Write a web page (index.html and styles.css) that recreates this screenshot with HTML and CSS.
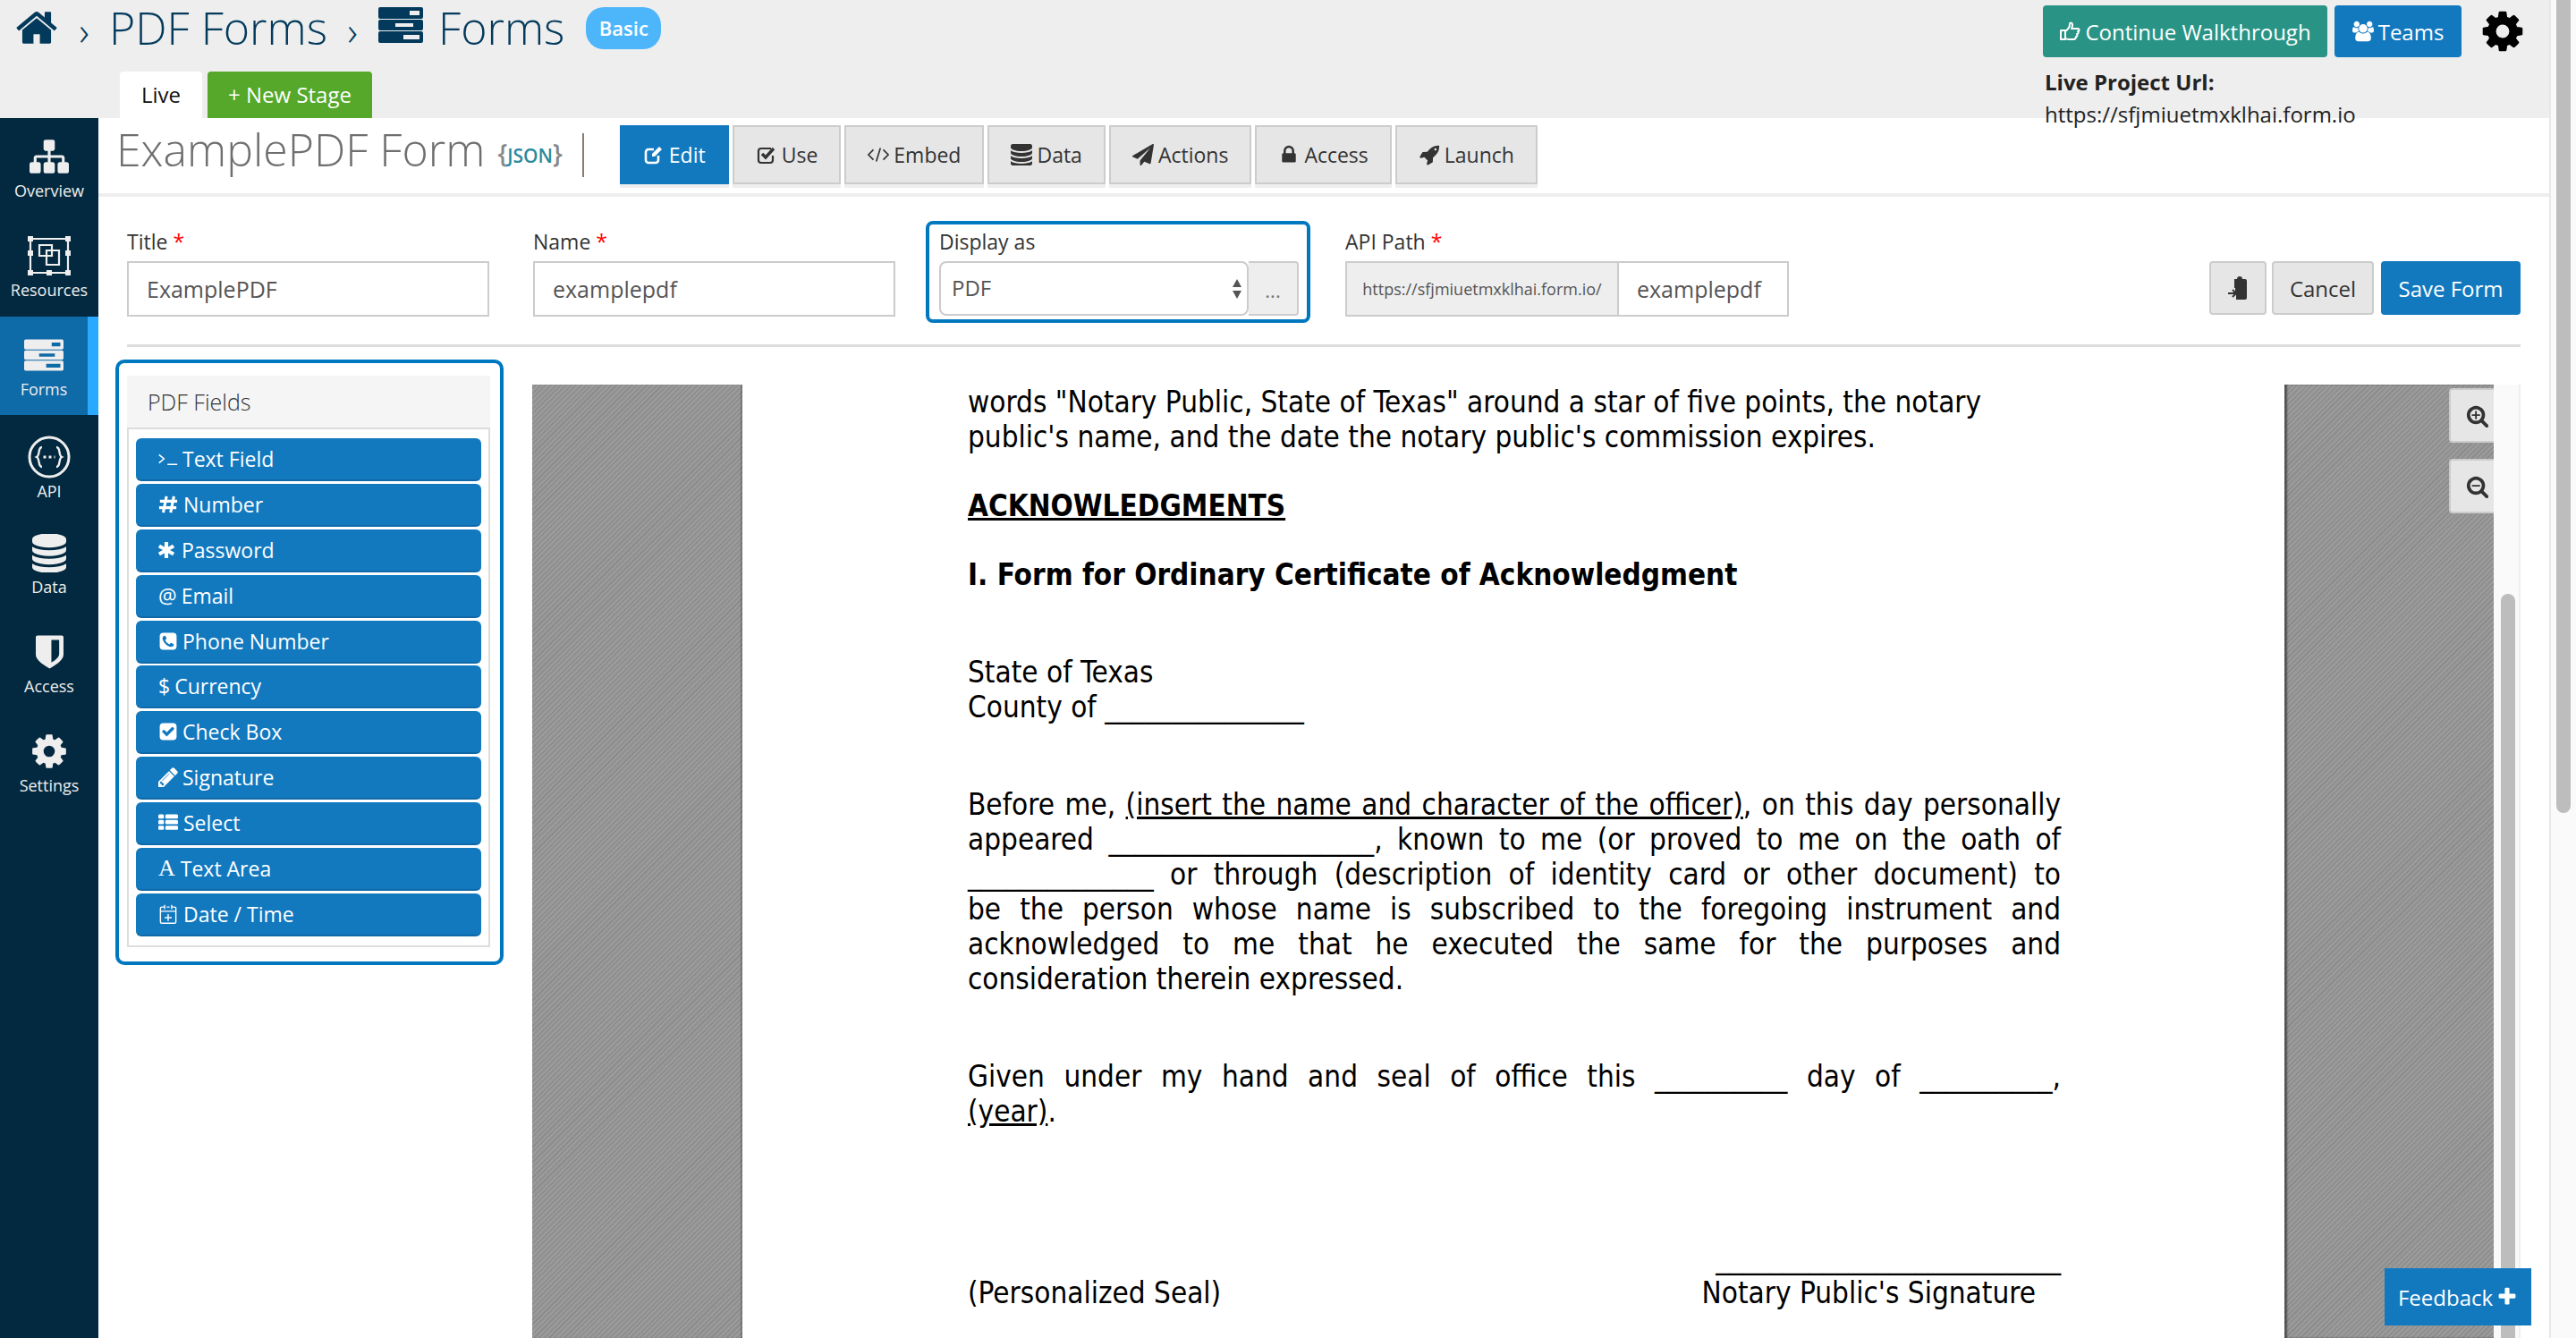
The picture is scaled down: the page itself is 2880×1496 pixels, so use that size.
FILE: index.html
```html
<!DOCTYPE html>
<html lang="en">
<head>
    <meta charset="UTF-8">
    <title>Forms</title>
    <link rel="stylesheet" href="styles.css">
</head>
<body>
    <svg class="sprite" xmlns="http://www.w3.org/2000/svg">
        <symbol id="i-home" viewBox="0 0 1792 1792"><path d="M1472 992v480q0 26-19 45t-45 19h-384v-384h-256v384h-384q-26 0-45-19t-19-45v-480q0-1 .5-3t.5-3l575-474 575 474q1 2 1 6zm223-69l-62 74q-8 9-21 11h-3q-13 0-21-7l-692-577-692 577q-12 8-24 7-13-2-21-11l-62-74q-8-10-7-23.5t11-21.5l719-599q32-26 76-26t76 26l244 204v-195q0-14 9-23t23-9h192q14 0 23 9t9 23v408l219 182q10 8 11 21.5t-7 23.5z"/></symbol>
        <symbol id="i-cog" viewBox="0 0 1792 1792"><path d="M1152 896q0-106-75-181t-181-75-181 75-75 181 75 181 181 75 181-75 75-181zm512-109v222q0 12-8 23t-20 13l-185 28q-19 54-39 91 35 50 107 138 10 12 10 25t-9 23q-27 37-99 108t-94 71q-12 0-26-9l-138-108q-44 23-91 38-16 136-29 186-7 28-36 28h-222q-14 0-24.5-8.5t-11.5-21.5l-28-184q-49-16-90-37l-141 107q-10 9-25 9-14 0-25-11-126-114-165-168-7-10-7-23 0-12 8-23 15-21 51-66.5t54-70.5q-27-50-41-99l-183-27q-13-2-21-12.5t-8-23.5v-222q0-12 8-23t19-13l186-28q14-46 39-92-40-57-107-138-10-12-10-24 0-10 9-23 26-36 98.5-107.5t94.5-71.5q13 0 26 10l138 107q44-23 91-38 16-136 29-186 7-28 36-28h222q14 0 24.5 8.5t11.5 21.5l28 184q49 16 90 37l142-107q9-9 24-9 13 0 25 10 129 119 165 170 7 8 7 22 0 12-8 23-15 21-51 66.5t-54 70.5q26 50 41 98l183 28q13 2 21 12.5t8 23.5z"/></symbol>
        <symbol id="i-database" viewBox="128 128 1536 1536"><path d="M896 768q237 0 443-43t325-127v170q0 69-103 128t-280 93.5-385 34.5-385-34.5-280-93.5-103-128v-170q119 84 325 127t443 43zm0 768q237 0 443-43t325-127v170q0 69-103 128t-280 93.5-385 34.5-385-34.5-280-93.5-103-128v-170q119 84 325 127t443 43zm0-384q237 0 443-43t325-127v170q0 69-103 128t-280 93.5-385 34.5-385-34.5-280-93.5-103-128v-170q119 84 325 127t443 43zm0-1152q208 0 385 34.5t280 93.5 103 128v128q0 69-103 128t-280 93.5-385 34.5-385-34.5-280-93.5-103-128v-128q0-69 103-128t280-93.5 385-34.5z"/></symbol>
        <symbol id="i-plus" viewBox="0 0 1792 1792"><path d="M1600 736v192q0 40-28 68t-68 28h-416v416q0 40-28 68t-68 28h-192q-40 0-68-28t-28-68v-416h-416q-40 0-68-28t-28-68v-192q0-40 28-68t68-28h416v-416q0-40 28-68t68-28h192q40 0 68 28t28 68v416h416q40 0 68 28t28 68z"/></symbol>
        <symbol id="i-lock" viewBox="0 0 1792 1792"><path d="M640 768h512v-192q0-106-75-181t-181-75-181 75-75 181v192zm832 96v576q0 40-28 68t-68 28h-960q-40 0-68-28t-28-68v-576q0-40 28-68t68-28h32v-192q0-184 132-316t316-132 316 132 132 316v192h32q40 0 68 28t28 68z"/></symbol>
        <symbol id="i-check-square" viewBox="0 0 1792 1792"><path d="M813 1299l614-614q19-19 19-45t-19-45l-102-102q-19-19-45-19t-45 19l-467 467-211-211q-19-19-45-19t-45 19l-102 102q-19 19-19 45t19 45l358 358q19 19 45 19t45-19zm851-883v960q0 119-84.5 203.5t-203.5 84.5h-960q-119 0-203.5-84.5t-84.5-203.5v-960q0-119 84.5-203.5t203.5-84.5h960q119 0 203.5 84.5t84.5 203.5z"/></symbol>
        <symbol id="i-phone-square" viewBox="0 0 1792 1792"><path d="M1408 1193q0-11-2-16t-18-16.5-40.5-25-47.5-26.5-45.5-25-28.5-15q-5-3-19-13t-25-15-21-5q-15 0-36.5 20.5t-39.5 45-38.5 45-33.5 20.5q-7 0-16.5-3.5t-15.5-6.5-17-9.5-14-8.5q-99-55-170-126.5t-127-170.5q-2-3-8.5-14t-9.5-17-6.5-15.5-3.5-16.5q0-13 20.5-33.5t45-38.5 45-39.5 20.5-36.5q0-10-5-21t-15-25-13-19q-3-6-15-28.5t-25-45.5-26.5-47.5-25-40.5-16.5-18-16-2q-48 0-101 22-46 21-80 94.5t-34 130.5q0 16 2.5 34t5 30.5 9 33 10 29.5 12.5 33 11 30q60 164 216.5 320.5t320.5 216.5q6 2 30 11t33 12.5 29.5 10 33 9 30.5 5 34 2.5q57 0 130.5-34t94.5-80q22-53 22-101zm256-777v960q0 119-84.5 203.5t-203.5 84.5h-960q-119 0-203.5-84.5t-84.5-203.5v-960q0-119 84.5-203.5t203.5-84.5h960q119 0 203.5 84.5t84.5 203.5z"/></symbol>
        <symbol id="i-pencil" viewBox="128 128 1536 1536"><path d="M491 1536l91-91-235-235-91 91v107h128v128h107zm523-928q0-22-22-22-10 0-17 7l-542 542q-7 7-7 17 0 22 22 22 10 0 17-7l542-542q7-7 7-17zm-54-192l416 416-832 832h-416v-416zm683 96q0 53-37 90l-166 166-416-416 166-165q36-38 90-38 53 0 91 38l235 234q37 39 37 91z"/></symbol>
        <symbol id="i-th-list" viewBox="0 128 1792 1536"><path d="M512 1248v192q0 40-28 68t-68 28h-320q-40 0-68-28t-28-68v-192q0-40 28-68t68-28h320q40 0 68 28t28 68zm0-512v192q0 40-28 68t-68 28h-320q-40 0-68-28t-28-68v-192q0-40 28-68t68-28h320q40 0 68 28t28 68zm1280 512v192q0 40-28 68t-68 28h-960q-40 0-68-28t-28-68v-192q0-40 28-68t68-28h960q40 0 68 28t28 68zm-1280-1024v192q0 40-28 68t-68 28h-320q-40 0-68-28t-28-68v-192q0-40 28-68t68-28h320q40 0 68 28t28 68zm1280 512v192q0 40-28 68t-68 28h-960q-40 0-68-28t-28-68v-192q0-40 28-68t68-28h960q40 0 68 28t28 68zm0-512v192q0 40-28 68t-68 28h-960q-40 0-68-28t-28-68v-192q0-40 28-68t68-28h960q40 0 68 28t28 68z"/></symbol>
        <symbol id="i-send" viewBox="0 0 1792 1792"><path d="M1764 11q33 24 27 64l-256 1536q-5 29-32 45-14 8-31 8-11 0-24-5l-453-185-242 295q-18 23-49 23-13 0-22-4-19-7-30.5-23.5t-11.5-36.5v-349l864-1059-1069 925-395-162q-37-14-40-55-2-40 32-59l1664-960q15-9 32-9 20 0 36 11z"/></symbol>
        <symbol id="i-rocket" viewBox="0 0 1792 1792"><path d="M1504 448q0-40-28-68t-68-28-68 28-28 68 28 68 68 28 68-28 28-68zm224-288q0 249-75.5 430.5t-253.5 360.5q-81 80-195 176l-20 379q-2 16-16 26l-384 224q-7 4-16 4-12 0-23-9l-64-64q-13-14-8-32l85-276-281-281-276 85q-3 1-9 1-14 0-23-9l-64-64q-17-19-5-39l224-384q10-14 26-16l379-20q96-114 176-195 188-187 358-258t431-71q14 0 24 9.5t10 22.5z"/></symbol>
        <symbol id="i-users" viewBox="0 0 1920 1792"><path d="M593 896q-162 5-265 128h-134q-82 0-138-40.5t-56-118.5q0-353 124-353 6 0 43.5 21t97.5 42.5 119 21.5q67 0 133-23-5 37-5 66 0 139 81 256zm1071 637q0 120-73 189.5t-194 69.5h-874q-121 0-194-69.5t-73-189.5q0-53 3.5-103.5t14-109 26.5-108.5 43-97.5 62-81 85.5-53.5 111.5-20q10 0 43 21.5t73 48 107 48 135 21.5 135-21.5 107-48 73-48 43-21.5q61 0 111.5 20t85.5 53.5 62 81 43 97.5 26.5 108.5 14 109 3.5 103.5zm-1024-1277q0 106-75 181t-181 75-181-75-75-181 75-181 181-75 181 75 75 181zm704 384q0 159-112.5 271.5t-271.5 112.5-271.5-112.5-112.5-271.5 112.5-271.5 271.5-112.5 271.5 112.5 112.5 271.5zm576 225q0 78-56 118.5t-138 40.5h-134q-103-123-265-128 81-117 81-256 0-29-5-66 66 23 133 23 59 0 119-21.5t97.5-42.5 43.5-21q124 0 124 353zm-128-609q0 106-75 181t-181 75-181-75-75-181 75-181 181-75 181 75 75 181z"/></symbol>
        <symbol id="i-sitemap" viewBox="0 128 1792 1536"><path d="M1792 1248v320q0 40-28 68t-68 28h-320q-40 0-68-28t-28-68v-320q0-40 28-68t68-28h96v-192h-512v192h96q40 0 68 28t28 68v320q0 40-28 68t-68 28h-320q-40 0-68-28t-28-68v-320q0-40 28-68t68-28h96v-192h-512v192h96q40 0 68 28t28 68v320q0 40-28 68t-68 28h-320q-40 0-68-28t-28-68v-320q0-40 28-68t68-28h96v-192q0-52 38-90t90-38h512v-192h-96q-40 0-68-28t-28-68v-320q0-40 28-68t68-28h320q40 0 68 28t28 68v320q0 40-28 68t-68 28h-96v192h512q52 0 90 38t38 90v192h96q40 0 68 28t28 68z"/></symbol>
        <symbol id="i-search-plus" viewBox="0 0 1792 1792"><path d="M1088 800v64q0 13-9.5 22.5t-22.5 9.5h-224v224q0 13-9.5 22.5t-22.5 9.5h-64q-13 0-22.5-9.5t-9.5-22.5v-224h-224q-13 0-22.5-9.5t-9.5-22.5v-64q0-13 9.5-22.5t22.5-9.5h224v-224q0-13 9.5-22.5t22.5-9.5h64q13 0 22.5 9.5t9.5 22.5v224h224q13 0 22.5 9.5t9.5 22.5zm128 32q0-185-131.5-316.5t-316.5-131.5-316.5 131.5-131.5 316.5 131.5 316.5 316.5 131.5 316.5-131.5 131.5-316.5zm512 832q0 53-37.5 90.5t-90.5 37.5q-54 0-90-38l-343-342q-179 124-399 124-143 0-273.5-55.5t-225-150-150-225-55.5-273.5 55.5-273.5 150-225 225-150 273.5-55.5 273.5 55.5 225 150 150 225 55.5 273.5q0 220-124 399l343 343q37 37 37 90z"/></symbol>
        <symbol id="i-search-minus" viewBox="0 0 1792 1792"><path d="M1088 800v64q0 13-9.5 22.5t-22.5 9.5h-576q-13 0-22.5-9.5t-9.5-22.5v-64q0-13 9.5-22.5t22.5-9.5h576q13 0 22.5 9.5t9.5 22.5zm128 32q0-185-131.5-316.5t-316.5-131.5-316.5 131.5-131.5 316.5 131.5 316.5 316.5 131.5 316.5-131.5 131.5-316.5zm512 832q0 53-37.5 90.5t-90.5 37.5q-54 0-90-38l-343-342q-179 124-399 124-143 0-273.5-55.5t-225-150-150-225-55.5-273.5 55.5-273.5 150-225 225-150 273.5-55.5 273.5 55.5 225 150 150 225 55.5 273.5q0 220-124 399l343 343q37 37 37 90z"/></symbol>
        <symbol id="i-forms" viewBox="0 0 50 40"><path fill-rule="evenodd" d="M2 0h46a2 2 0 0 1 2 2v9a2 2 0 0 1-2 2H2a2 2 0 0 1-2-2V2a2 2 0 0 1 2-2zm33 4v5h11V4zM2 14h46a2 2 0 0 1 2 2v8a2 2 0 0 1-2 2H2a2 2 0 0 1-2-2v-8a2 2 0 0 1 2-2zm17 4v4h20v-4zM2 27h46a2 2 0 0 1 2 2v9a2 2 0 0 1-2 2H2a2 2 0 0 1-2-2v-9a2 2 0 0 1 2-2zm26 4v5h18v-5z"/></symbol>
        <symbol id="i-edit" viewBox="0 0 24 24"><path fill="none" stroke="currentColor" stroke-width="2.6" d="M17 13v5a3 3 0 0 1-3 3H6a3 3 0 0 1-3-3v-9a3 3 0 0 1 3-3h6"/><path d="M10 11l8-8 3 3-8 8h-3z"/></symbol>
        <symbol id="i-check-o" viewBox="0 0 24 24"><path fill="none" stroke="currentColor" stroke-width="2.2" d="M19 13v5a3 3 0 0 1-3 3H6a3 3 0 0 1-3-3V8a3 3 0 0 1 3-3h11"/><path fill="none" stroke="currentColor" stroke-width="3.4" d="M7 11l4 4 9-10"/></symbol>
        <symbol id="i-code" viewBox="0 0 26 24"><path fill="none" stroke="currentColor" stroke-width="1.8" d="M7 6l-6 6 6 6M19 6l6 6-6 6M15.500 4l-5 16"/></symbol>
        <symbol id="i-thumb" viewBox="0 0 24 24"><path fill="none" stroke="currentColor" stroke-width="2" stroke-linejoin="round" d="M2 11h5v10H2zM7 12c3-2 5-5 5-8 0-2 3-2 3 1 0 2-1 4-1 4h7c2 0 2 3 0 3 1 1 1 3-1 3 1 2 0 3-1 3 0 2-1 3-3 3h-5c-2 0-3-1-4-1"/></symbol>
        <symbol id="i-terminal" viewBox="0 0 28 22"><path fill="none" stroke="currentColor" stroke-width="2" d="M1 5l7 6-7 6M13 19h14"/></symbol>
        <symbol id="i-calendar" viewBox="0 0 24 28"><path fill="none" stroke="currentColor" stroke-width="1.800" d="M6 4H3a2 2 0 0 0-2 2v19a2 2 0 0 0 2 2h18a2 2 0 0 0 2-2V6a2 2 0 0 0-2-2h-3M10 4h4M1 10h22M7 1v6M17 1v6M12 14v10M7 19h10"/></symbol>
        <symbol id="i-asterisk" viewBox="0 0 20 20"><path fill="none" stroke="currentColor" stroke-width="4.600" d="M10 0v20M1 5l18 10M19 5L1 15"/></symbol>
        <symbol id="i-hash" viewBox="0 0 24 24"><path fill="none" stroke="currentColor" stroke-width="3.400" d="M10 2L6 22M19 2l-4 20M2 8h21M1 16h21"/></symbol>
        <symbol id="i-paste" viewBox="0 0 24 28"><path d="M8 4h3a3 3 0 0 1 6 0h3a2 2 0 0 1 2 2v19a2 2 0 0 1-2 2H10v-8h-1v-5H8z"/><path fill="none" stroke="currentColor" stroke-width="2" d="M1 20h8M6 16l4 4-4 4"/></symbol>
        <symbol id="i-resources" viewBox="0 0 48 44"><path fill="none" stroke="currentColor" stroke-width="2.200" d="M3 3h42v38H3zM13 10h14v12H13zM21 16h14v16H21z"/><path d="M0 0h6v6H0zM42 0h6v6h-6zM0 38h6v6H0zM42 38h6v6h-6zM21 38h6v6h-6zM0 16h6v6H0zM42 16h6v6h-6z" fill="currentColor"/></symbol>
        <symbol id="i-api" viewBox="0 0 48 48"><circle cx="24" cy="24" r="22" fill="none" stroke="currentColor" stroke-width="3"/><path fill="none" stroke="currentColor" stroke-width="2.400" d="M16 13c-5 0-2 9-6 11 4 2 1 11 6 11M32 13c5 0 2 9 6 11-4 2-1 11-6 11"/><path fill="none" stroke="currentColor" stroke-width="3" stroke-dasharray="3 3" d="M17.500 24h13"/></symbol>
        <symbol id="i-shield" viewBox="0 0 32 38"><path fill-rule="evenodd" d="M0 2c0-1 1-2 2-2h28c1 0 2 1 2 2v20c0 7-11 13-16 16C11 35 0 29 0 22zm18 3v26c4-2 9-6 9-10V5z"/></symbol>
    </svg>

    <div class="app">
        <header class="topbar">
            <div class="top-left">
                <div class="crumbs">
                    <svg class="crumb-home"><use href="#i-home"/></svg>
                    <span class="crumb-sep">›</span>
                    <span class="crumb-text">PDF Forms</span>
                    <span class="crumb-sep">›</span>
                    <svg class="crumb-forms"><use href="#i-forms"/></svg>
                    <span class="crumb-text">Forms</span>
                    <span class="badge">Basic</span>
                </div>
                <div class="stages">
                    <span class="stage stage-live">Live</span>
                    <span class="stage stage-new">+ New Stage</span>
                </div>
            </div>
            <div class="top-right">
                <div class="top-actions">
                    <a class="btn-top btn-teal"><svg class="ico"><use href="#i-thumb"/></svg>Continue Walkthrough</a>
                    <a class="btn-top btn-blue"><svg class="ico"><use href="#i-users"/></svg>Teams</a>
                    <svg class="top-gear"><use href="#i-cog"/></svg>
                </div>
                <div class="live-url"><b>Live Project Url:</b> https://sfjmiuetmxklhai.form.io</div>
            </div>
        </header>

        <div class="layout">
            <nav class="sidebar">
                <a class="side-item"><span class="side-icon"><svg class="s-sitemap"><use href="#i-sitemap"/></svg></span>Overview</a>
                <a class="side-item"><span class="side-icon"><svg class="s-resources"><use href="#i-resources"/></svg></span>Resources</a>
                <a class="side-item active"><span class="side-icon"><svg class="s-forms"><use href="#i-forms"/></svg></span>Forms</a>
                <a class="side-item side-api"><span class="side-icon"><svg class="s-api"><use href="#i-api"/></svg></span>API</a>
                <a class="side-item"><span class="side-icon"><svg class="s-data"><use href="#i-database"/></svg></span>Data</a>
                <a class="side-item"><span class="side-icon"><svg class="s-shield"><use href="#i-shield"/></svg></span>Access</a>
                <a class="side-item"><span class="side-icon"><svg class="s-cog"><use href="#i-cog"/></svg></span>Settings</a>
            </nav>

            <main class="main">
                <div class="title-row">
                    <h1 class="form-title">ExamplePDF Form</h1>
                    <span class="json-tag"><i>{</i>JSON<i>}</i></span>
                    <span class="title-divider"></span>
                    <div class="tabs">
                        <a class="tab tab-on"><svg class="ico"><use href="#i-edit"/></svg>Edit</a>
                        <a class="tab"><svg class="ico"><use href="#i-check-o"/></svg>Use</a>
                        <a class="tab"><svg class="ico"><use href="#i-code"/></svg>Embed</a>
                        <a class="tab"><svg class="ico"><use href="#i-database"/></svg>Data</a>
                        <a class="tab"><svg class="ico"><use href="#i-send"/></svg>Actions</a>
                        <a class="tab"><svg class="ico"><use href="#i-lock"/></svg>Access</a>
                        <a class="tab"><svg class="ico"><use href="#i-rocket"/></svg>Launch</a>
                    </div>
                </div>

                <div class="form-row">
                    <div class="field field-title">
                        <label>Title <em>*</em></label>
                        <div class="input">ExamplePDF</div>
                    </div>
                    <div class="field field-name">
                        <label>Name <em>*</em></label>
                        <div class="input">examplepdf</div>
                    </div>
                    <div class="field field-display">
                        <label>Display as</label>
                        <div class="select-group">
                            <div class="select">PDF<span class="select-arrows"></span></div>
                            <div class="select-more">...</div>
                        </div>
                    </div>
                    <div class="field field-path">
                        <label>API Path <em>*</em></label>
                        <div class="path-group">
                            <div class="path-addon">https://sfjmiuetmxklhai.form.io/</div>
                            <div class="input path-input">examplepdf</div>
                        </div>
                    </div>
                    <div class="form-actions">
                        <a class="btn btn-icon"><svg class="ico-paste"><use href="#i-paste"/></svg></a>
                        <a class="btn btn-cancel">Cancel</a>
                        <a class="btn btn-save">Save Form</a>
                    </div>
                </div>

                <div class="workspace">
                    <aside class="fields-panel">
                        <div class="fields-inner">
                            <div class="fields-head">PDF Fields</div>
                            <div class="fields-list">
                                <a class="field-btn"><svg class="fi fi-terminal"><use href="#i-terminal"/></svg>Text Field</a>
                                <a class="field-btn"><svg class="fi"><use href="#i-hash"/></svg>Number</a>
                                <a class="field-btn"><svg class="fi fi-star"><use href="#i-asterisk"/></svg>Password</a>
                                <a class="field-btn"><span class="fi-text">@</span>Email</a>
                                <a class="field-btn"><svg class="fi fi-sq"><use href="#i-phone-square"/></svg>Phone Number</a>
                                <a class="field-btn"><span class="fi-text">$</span>Currency</a>
                                <a class="field-btn"><svg class="fi fi-sq"><use href="#i-check-square"/></svg>Check Box</a>
                                <a class="field-btn"><svg class="fi fi-sq"><use href="#i-pencil"/></svg>Signature</a>
                                <a class="field-btn"><svg class="fi"><use href="#i-th-list"/></svg>Select</a>
                                <a class="field-btn"><span class="fi-serif">A</span>Text Area</a>
                                <a class="field-btn"><svg class="fi"><use href="#i-calendar"/></svg>Date / Time</a>
                            </div>
                        </div>
                    </aside>

                    <section class="viewer">
                        <div class="gutter gutter-left"></div>
                        <div class="pdf-page">
                            <p class="pl">words "Notary Public, State of Texas" around a star of five points, the notary</p>
                            <p class="pl">public's name, and the date the notary public's commission expires.</p>
                            <p class="pl pl-gap1 pl-b"><u>ACKNOWLEDGMENTS</u></p>
                            <p class="pl pl-gap1 pl-b">I. Form for Ordinary Certificate of Acknowledgment</p>
                            <p class="pl pl-gap2">State of Texas</p>
                            <p class="pl">County of _______________</p>
                            <p class="pl pl-gap2 pl-j">Before me, <u>(insert the name and character of the officer)</u>, on this day personally</p>
                            <p class="pl pl-j">appeared ____________________, known to me (or proved to me on the oath of</p>
                            <p class="pl pl-j">______________ or through (description of identity card or other document) to</p>
                            <p class="pl pl-j">be the person whose name is subscribed to the foregoing instrument and</p>
                            <p class="pl pl-j">acknowledged to me that he executed the same for the purposes and</p>
                            <p class="pl">consideration therein expressed.</p>
                            <p class="pl pl-gap2 pl-j">Given under my hand and seal of office this __________ day of __________,</p>
                            <p class="pl"><u>(year)</u>.</p>
                            <p class="pl pl-gap3 pl-sign"><span></span>__________________________</p>
                            <p class="pl pl-seal"><span>(Personalized Seal)</span><span>Notary Public's Signature</span></p>
                        </div>
                        <div class="gutter gutter-right">
                            <a class="zoom-btn"><svg><use href="#i-search-plus"/></svg></a>
                            <a class="zoom-btn"><svg><use href="#i-search-minus"/></svg></a>
                        </div>
                        <div class="viewer-scroll"><span class="viewer-thumb"></span></div>
                    </section>
                </div>
            </main>
        </div>
    </div>

    <div class="page-scroll"><span class="page-thumb"></span></div>

    <a class="feedback">Feedback <svg><use href="#i-plus"/></svg></a>
</body>
</html>
```

FILE: styles.css
```css
* {
    box-sizing: border-box;
}
html, body {
    height: 100%;
}
body {
    margin: 0;
    display: flex;
    height: 1496px;
    overflow: hidden;
    font-family: "Open Sans", sans-serif;
    color: #333;
    background-color: #fff;
}
a {
    text-decoration: none;
}
.sprite {
    display: none;
}
svg {
    fill: currentColor;
}
.ico {
    width: 24px;
    height: 24px;
    margin-right: 5px;
    flex: none;
}

.app {
    width: 2850px;
    display: flex;
    flex-direction: column;
}

/* top bar */
.topbar {
    height: 132px;
    flex: none;
    display: flex;
    justify-content: space-between;
    background-color: #eee;
}
.top-left {
    display: flex;
    flex-direction: column;
}
.crumbs {
    height: 80px;
    padding-left: 16px;
    display: flex;
    align-items: flex-start;
    color: #033a5c;
}
.crumb-home {
    width: 50px;
    height: 50px;
    margin-top: 6px;
}
.crumb-sep {
    font-size: 44px;
    font-weight: 300;
    line-height: 60px;
    width: 56px;
    text-align: center;
    margin-top: 4px;
}
.crumb-text {
    font-size: 50px;
    font-weight: 300;
    line-height: 62px;
}
.crumb-forms {
    width: 52px;
    height: 40px;
    margin-top: 8px;
    margin-right: 16px;
}
.badge {
    margin-left: 24px;
    margin-top: 8px;
    width: 84px;
    height: 47px;
    border-radius: 20px;
    background-color: #4db6fa;
    color: #fff;
    font-size: 22px;
    font-weight: 600;
    text-align: center;
    line-height: 47px;
}
.stages {
    padding-left: 134px;
    display: flex;
    gap: 6px;
}
.stage {
    height: 52px;
    line-height: 52px;
    font-size: 24px;
    text-align: center;
    border-radius: 4px 4px 0 0;
}
.stage-live {
    width: 92px;
    background-color: #fff;
    color: #111;
}
.stage-new {
    width: 184px;
    background-color: #55a82a;
    color: #fff;
}
.top-right {
    width: 564px;
    padding-right: 32px;
    display: flex;
    flex-direction: column;
    align-items: flex-end;
}
.top-actions {
    margin-top: 6px;
    display: flex;
    align-items: center;
    gap: 8px;
}
.btn-top {
    height: 58px;
    padding: 0 18px;
    display: flex;
    align-items: center;
    justify-content: center;
    border-radius: 4px;
    color: #fff;
    font-size: 24px;
}
.btn-teal {
    width: 318px;
    background-color: #299485;
}
.btn-blue {
    width: 142px;
    background-color: #1279bf;
}
.top-gear {
    width: 52px;
    height: 52px;
    margin-left: 12px;
    color: #000;
    margin-right: -6px;
}
.live-url {
    margin-top: 10px;
    font-size: 24px;
    line-height: 36px;
    color: #222;
}
.live-url b {
    font-weight: 700;
}

.layout {
    flex: 1;
    display: flex;
    min-height: 0;
}

/* left nav */
.sidebar {
    width: 110px;
    flex: none;
    background-color: #02293f;
}
.side-item {
    display: block;
    height: 111px;
    padding-top: 18px;
    color: #eee;
    font-size: 18px;
    line-height: 24px;
    text-align: center;
}
.side-icon {
    display: flex;
    height: 50px;
    margin-bottom: 1px;
    align-items: center;
    justify-content: center;
    color: #eee;
}
.side-item.active {
    background-color: #0f6aa8;
    border-right: 12px solid #29a9ff;
    height: 110px;
}
.side-api {
    padding-top: 22px;
}
.s-sitemap { width: 44px; height: 38px; }
.s-resources { width: 48px; height: 44px; }
.s-forms { width: 44px; height: 36px; }
.s-api { width: 48px; height: 48px; }
.s-data { width: 38px; height: 43px; }
.s-shield { width: 31px; height: 38px; }
.s-cog { width: 44px; height: 44px; }

.main {
    flex: 1;
    display: flex;
    flex-direction: column;
    min-width: 0;
}

/* title and tabs */
.title-row {
    height: 88px;
    flex: none;
    display: flex;
    padding-left: 20px;
    border-bottom: 4px solid #eee;
}
.form-title {
    margin: 0;
    font-size: 50px;
    font-weight: 300;
    line-height: 70px;
    height: 70px;
    color: #6f6f6f;
}
.json-tag {
    margin: 24px 0 0 14px;
    font-size: 21px;
    font-weight: 600;
    line-height: 30px;
    color: #2a8a9e;
}
.json-tag i {
    font-style: normal;
    font-size: 28px;
    color: #888;
}
.title-divider {
    width: 2px;
    height: 49px;
    margin: 17px 40px 0 22px;
    background-color: #8a7a70;
}
.tabs {
    display: flex;
    gap: 4px;
    margin-top: 8px;
    height: 70px;
    align-items: flex-start;
}
.tab {
    height: 66px;
    padding: 0 24px;
    display: flex;
    align-items: center;
    justify-content: center;
    font-size: 23px;
    color: #333;
    background-color: #e6e6e6;
    border: 2px solid #ccc;
    box-shadow: 0 4px 0 #eee;
}
.tab-on {
    background-color: #1279bf;
    border-color: #1279bf;
    color: #fff;
}

/* form row */
.form-row {
    height: 168px;
    flex: none;
    margin: 0 32px;
    display: flex;
    border-bottom: 3px solid #ddd;
    position: relative;
}
.field {
    flex: none;
    padding-top: 34px;
}
.field label {
    display: block;
    height: 38px;
    font-size: 23px;
    line-height: 32px;
    color: #333;
}
.field em {
    color: #f00;
    font-style: normal;
}
.input {
    height: 62px;
    border: 2px solid #ccc;
    padding-left: 20px;
    font-size: 25px;
    line-height: 58px;
    color: #555;
}
.field-title {
    width: 405px;
}
.field-name {
    width: 405px;
    margin-left: 49px;
}
.field-display {
    width: 430px;
    height: 114px;
    margin: 27px 39px 0 34px;
    padding: 3px 9px 0 11px;
    border: 4px solid #0078c0;
    border-radius: 8px;
}
.field-display label {
    height: 38px;
}
.select-group {
    display: flex;
    height: 61px;
}
.select {
    flex: 1;
    position: relative;
    border: 2px solid #ccc;
    border-radius: 8px;
    padding-left: 12px;
    font-size: 24px;
    line-height: 56px;
    color: #555;
}
.select-arrows {
    position: absolute;
    right: 6px;
    top: 18px;
    width: 0;
    height: 22px;
    border-left: 5px solid transparent;
    border-right: 5px solid transparent;
    background:
        linear-gradient(#555, #555) center/0 0 no-repeat;
}
.select-arrows::before,
.select-arrows::after {
    content: "";
    position: absolute;
    left: -5px;
    border-left: 5px solid transparent;
    border-right: 5px solid transparent;
}
.select-arrows::before {
    top: 0;
    border-bottom: 9px solid #555;
}
.select-arrows::after {
    bottom: 0;
    border-top: 9px solid #555;
}
.select-more {
    width: 56px;
    background-color: #eee;
    border: 2px solid #ccc;
    border-left: none;
    border-radius: 0 4px 4px 0;
    text-align: center;
    font-size: 22px;
    line-height: 60px;
    color: #777;
}
.field-path {
    width: 496px;
}
.path-group {
    display: flex;
}
.path-addon {
    width: 304px;
    height: 62px;
    background-color: #eee;
    border: 2px solid #ccc;
    border-right: none;
    text-align: center;
    font-size: 18px;
    line-height: 58px;
    color: #555;
}
.path-input {
    flex: 1;
}
.form-actions {
    margin-left: auto;
    margin-top: 72px;
    display: flex;
    gap: 6px;
    height: 60px;
}
.btn {
    height: 60px;
    display: flex;
    align-items: center;
    justify-content: center;
    border-radius: 4px;
    font-size: 24px;
}
.btn-icon {
    width: 64px;
    background-color: #e6e6e6;
    border: 2px solid #ccc;
    color: #333;
}
.ico-paste {
    width: 24px;
    height: 28px;
}
.btn-cancel {
    width: 114px;
    background-color: #e6e6e6;
    border: 2px solid #ccc;
    color: #333;
}
.btn-save {
    width: 156px;
    margin-left: 2px;
    background-color: #1279bf;
    color: #fff;
}

/* fields panel + pdf */
.workspace {
    flex: 1;
    display: flex;
    min-height: 0;
    padding-left: 19px;
    padding-right: 32px;
}
.fields-panel {
    width: 434px;
    height: 677px;
    margin-top: 14px;
    flex: none;
    padding: 14px 11px 16px 9px;
    border: 4px solid #0078c0;
    border-radius: 10px;
}
.fields-inner {
    height: 100%;
    border: 2px solid #ddd;
    border-top: none;
}
.fields-head {
    height: 60px;
    margin: 0 -2px;
    padding-left: 23px;
    background-color: #f5f5f5;
    border-bottom: 2px solid #ddd;
    font-size: 25px;
    font-weight: 300;
    line-height: 58px;
    color: #333;
}
.fields-list {
    padding: 10px 8px 0 8px;
}
.field-btn {
    height: 48px;
    margin-bottom: 2.9px;
    padding-left: 25px;
    display: flex;
    align-items: center;
    background-color: #1279bf;
    border-bottom: 2px solid #0f69a8;
    border-radius: 6px;
    color: #fff;
    font-size: 23px;
}
.fi {
    width: 22px;
    height: 22px;
    margin-right: 6px;
    flex: none;
}
.fi-sq {
    margin-right: 5px;
}
.fi-terminal {
    margin-right: 5px;
}
.fi-star {
    width: 18px;
    height: 18px;
    margin-right: 8px;
}
.fi-text {
    margin-right: 5px;
}
.fi-serif {
    font-family: "Liberation Serif", serif;
    font-size: 26px;
    margin-right: 6px;
}

.viewer {
    flex: 1;
    display: flex;
    margin-top: 42px;
    margin-left: 32px;
    min-width: 0;
}
.gutter {
    background-color: #959595;
    background-image: repeating-linear-gradient(-45deg, #8c8c8c 0, #8c8c8c 1.5px, #9a9a9a 1.5px, #9a9a9a 4px);
}
.gutter-left {
    width: 235px;
    flex: none;
    box-shadow: inset -2px 0 1px rgba(0, 0, 0, 0.2);
}
.gutter-right {
    width: 234px;
    flex: none;
    box-shadow: inset 3px 0 2px rgba(0, 0, 0, 0.45);
    display: flex;
    flex-direction: column;
    align-items: flex-end;
    gap: 18px;
    padding-top: 4px;
    margin-right: 0;
}
.zoom-btn {
    width: 64px;
    height: 61px;
    margin-right: -14px;
    position: relative;
    display: flex;
    align-items: center;
    justify-content: center;
    background-color: #e6e6e6;
    border: 2px solid #ccc;
    border-radius: 4px;
    color: #333;
}
.zoom-btn svg {
    width: 26px;
    height: 26px;
}
.pdf-page {
    flex: 1;
    min-width: 0;
    padding: 0 250px 0 252px;
    font-family: "DejaVu Sans Condensed", "DejaVu Sans", sans-serif;
    font-stretch: condensed;
    font-size: 33px;
    color: #000;
    overflow: hidden;
}
.pl {
    margin: 0;
    height: 39px;
    line-height: 39px;
    white-space: nowrap;
}
.pl-j {
    white-space: normal;
    text-align-last: justify;
}
.pl-b {
    font-weight: bold;
}
.pl-gap1 {
    margin-top: 38px;
}
.pl-gap2 {
    margin-top: 70px;
}
.pl-gap3 {
    margin-top: 125px;
}
.pl-sign {
    text-align: right;
}
.pl-seal {
    display: flex;
    justify-content: space-between;
    padding-right: 28px;
}
.viewer-scroll {
    width: 30px;
    flex: none;
    position: relative;
    background-color: #fafafa;
    border-right: 2px solid #eee;
}
.viewer-thumb {
    position: absolute;
    left: 8px;
    top: 234px;
    bottom: 0;
    width: 16px;
    border-radius: 8px 8px 0 0;
    background-color: #bdbdbd;
}

.page-scroll {
    width: 30px;
    flex: none;
    position: relative;
    background-color: #fafafa;
    border-left: 2px solid #e8e8e8;
}
.page-thumb {
    position: absolute;
    left: 6px;
    top: 0;
    width: 16px;
    height: 909px;
    border-radius: 0 0 8px 8px;
    background-color: #bdbdbd;
}

.feedback {
    position: absolute;
    left: 2666px;
    top: 1418px;
    width: 164px;
    height: 64px;
    display: flex;
    align-items: center;
    justify-content: center;
    gap: 4px;
    background-color: #1279bf;
    color: #fff;
    font-size: 24px;
}
.feedback svg {
    width: 24px;
    height: 24px;
}
```
